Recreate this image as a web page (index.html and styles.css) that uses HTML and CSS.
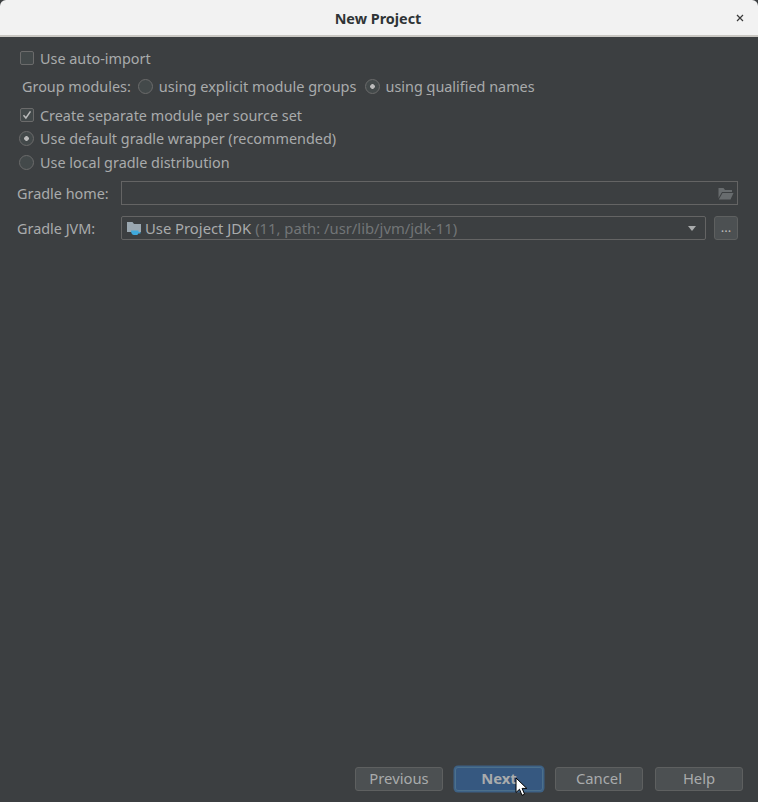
FILE: index.html
```html
<!DOCTYPE html>
<html lang="en">
<head>
  <meta charset="UTF-8">
  <title>New Project</title>
  <link rel="stylesheet" href="styles.css">
</head>
<body>
  <div class="titlebar">
    <span class="title">New Project</span>
    <svg class="close" width="8" height="8" viewBox="0 0 8 8"><path d="M1 1l6 6M7 1L1 7" stroke="#3a3a3a" stroke-width="1.2" fill="none"/></svg>
  </div>

  <div class="content">
    <div class="row row-import">
      <span class="check"></span>
      <span>Use auto-import</span>
    </div>

    <div class="row row-group">
      <span class="group-label">Group modules:</span>
      <span class="radio"></span>
      <span class="radio-text">using explicit module <u>g</u>roups</span>
      <span class="radio on"></span>
      <span>using <u>q</u>ualified names</span>
    </div>

    <div class="row row-separate">
      <span class="check on">
        <svg width="14" height="14" viewBox="0 0 14 14"><path d="M3.5 7.200l2.400 2.800 4.600-6.600" stroke="#bbbbbb" stroke-width="1.500" fill="none"/></svg>
      </span>
      <span>Create separate module per source set</span>
    </div>
    <div class="row row-wrapper">
      <span class="radio on"></span>
      <span>Use default gradle wrapper (recommended)</span>
    </div>
    <div class="row row-local">
      <span class="radio"></span>
      <span>Use local gradle distribution</span>
    </div>

    <div class="field field-home">
      <label class="field-label">Gradle home:</label>
      <div class="input">
        <svg class="open-icon" width="16" height="13" viewBox="0 0 16 13"><path d="M0.500 1h5l1.500 2h7v2H4L0.500 11z" fill="#686c6e"/><path d="M4.500 6h11l-3 6.500H0.800z" fill="#686c6e"/></svg>
      </div>
    </div>

    <div class="field field-jvm">
      <label class="field-label">Gradle JVM:</label>
      <div class="select">
        <svg class="jdk-icon" width="15" height="15" viewBox="0 0 15 15"><path d="M0 1h5.500l1.500 2h7v8H0z" fill="#9aa7b0"/><path d="M4 9.500h7.500v1.500h2v1.500h-2.200c-.4 1-1 1.500-1.800 1.500H7c-1.500 0-3-1.500-3-4.500z" fill="#3fa9dc"/></svg>
        <span>Use Project JDK <span class="muted">(11, path: /usr/lib/jvm/jdk-11)</span></span>
        <span class="arrow"></span>
      </div>
      <button class="more">...</button>
    </div>
  </div>

  <div class="footer">
    <button class="btn">Previous</button>
    <button class="btn btn-next">Next</button>
    <button class="btn">Cancel</button>
    <button class="btn">Help</button>
  </div>

  <svg class="cursor" width="14" height="20" viewBox="0 0 14 20"><path d="M1 1v14.500l3.500-3.200 2.500 6 2.600-1.100-2.500-5.800h4.700z" fill="#ffffff" stroke="#000000" stroke-width="1"/></svg>
</body>
</html>
```

FILE: styles.css
```css
html, body {
  height: 100%;
}

body {
  position: relative;
  display: flex;
  flex-direction: column;
  margin: 0;
  overflow: hidden;
  background: #3c3f41;
  color: #a9abac;
  font-family: "Noto Sans", sans-serif;
  font-size: 14.4px;
}

/* Title bar */
.titlebar {
  position: relative;
  display: flex;
  align-items: center;
  justify-content: center;
  box-sizing: border-box;
  height: 37px;
  padding: 1px 2px 0 0;
  background: #f2f2f2;
  border-radius: 6px 6px 0 0;
  border-bottom: 2px solid #c9c7c2;
}

.title {
  color: #2f3436;
  font-size: 14.4px;
  font-weight: 700;
}

.close {
  position: absolute;
  top: 14px;
  right: 14px;
}

/* Options */
.content {
  flex: 1;
  padding: 0 20px 0 17px;
}

.row {
  display: flex;
  align-items: center;
  height: 20px;
}

.row-import {
  margin-top: 11px;
  padding-left: 3px;
}

.row-group {
  margin-top: 8px;
  padding-left: 5px;
}

.row-separate {
  margin-top: 9px;
  padding-left: 3px;
}

.row-wrapper {
  margin-top: 3px;
  padding-left: 2px;
}

.row-local {
  margin-top: 4px;
  padding-left: 2px;
}

.check {
  display: flex;
  flex: none;
  align-items: center;
  justify-content: center;
  box-sizing: border-box;
  width: 14px;
  height: 14px;
  margin-right: 6px;
  background: #43494a;
  border: 1px solid #6b6b6b;
  border-radius: 2px;
}

.check svg {
  flex: none;
}

.radio {
  flex: none;
  box-sizing: border-box;
  width: 15px;
  height: 15px;
  margin-right: 6px;
  background: #43494a;
  border: 1px solid #6b6b6b;
  border-radius: 50%;
}

.radio.on {
  background: radial-gradient(circle, #bbbbbb 0, #bbbbbb 2px, #43494a 2.6px);
}

.group-label {
  margin-right: 7px;
}

.radio-text {
  margin-right: 8px;
  font-size: 14.55px;
}

u {
  text-underline-offset: 2px;
}

/* Gradle fields */
.field {
  display: flex;
  align-items: center;
}

.field-home {
  margin-top: 9px;
}

.field-jvm {
  margin-top: 11px;
}

.field-label {
  width: 104px;
  flex: none;
}

.input {
  display: flex;
  flex: 1;
  align-items: center;
  justify-content: flex-end;
  box-sizing: border-box;
  height: 24px;
  padding-right: 3px;
  border: 1px solid #646464;
}

.select {
  display: flex;
  flex: 1;
  align-items: center;
  box-sizing: border-box;
  height: 24px;
  padding: 0 9px 0 5px;
  border: 1px solid #646464;
  border-radius: 2px;
  color: #a9abac;
  font-size: 14.8px;
}

.jdk-icon {
  margin-right: 3px;
}

.muted {
  color: #727577;
}

.arrow {
  width: 0;
  height: 0;
  margin-left: auto;
  border-top: 5px solid #a9abac;
  border-left: 4.5px solid transparent;
  border-right: 4.5px solid transparent;
}

.more {
  width: 24px;
  height: 24px;
  margin-left: 8px;
  padding: 0 0 2px;
  background: #4c5052;
  border: 1px solid #5e6060;
  border-radius: 3px;
  color: #bbbbbb;
  font-family: "Noto Sans", sans-serif;
  font-size: 13px;
}

/* Bottom buttons */
.footer {
  display: flex;
  justify-content: flex-end;
  gap: 12px;
  padding: 0 15px 11px 0;
}

.btn {
  box-sizing: border-box;
  width: 88px;
  height: 24px;
  padding: 0 0 2px;
  background: #4c5052;
  border: 1px solid #5e6060;
  border-radius: 3px;
  color: #a9abac;
  font-family: "Noto Sans", sans-serif;
  font-size: 14.8px;
}

.btn-next {
  background: #365880;
  border-color: #4c708c;
  box-shadow: 0 0 0 1.5px #3d6185;
  font-weight: 700;
}

.cursor {
  position: absolute;
  left: 515px;
  top: 777px;
}
```
